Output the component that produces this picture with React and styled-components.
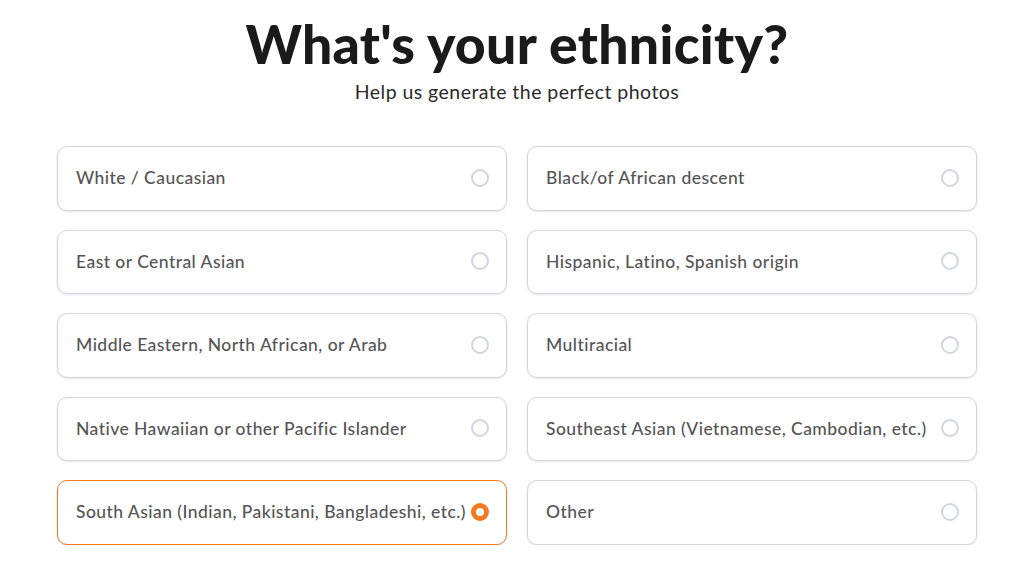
import React, { useState } from "react";
import styled, { createGlobalStyle } from "styled-components";

const Global = createGlobalStyle`
  html, body { margin: 0; padding: 0; background: #ffffff; }
  body { font-family: Lato, "Open Sans", sans-serif; -webkit-font-smoothing: antialiased; }
`;

const Page = styled.div`
  width: 920px;
  margin-left: 57px;
  padding-top: 11px;
  display: flex;
  flex-direction: column;
  align-items: center;
`;

const Title = styled.h1`
  margin: 0;
  font-family: Lato, sans-serif;
  font-weight: 900;
  font-size: 53.5px;
  line-height: 64px;
  color: #1a1a1a;
  letter-spacing: 0.3px;
`;

const Subtitle = styled.p`
  margin: 5px 0 0;
  font-family: Lato, sans-serif;
  font-size: 19.5px;
  line-height: 24px;
  color: #2a2a2a;
  letter-spacing: 0.45px;
`;

const Grid = styled.div`
  width: 100%;
  margin-top: 42px;
  display: grid;
  grid-template-columns: 1fr 1fr;
  grid-auto-rows: 64.5px;
  column-gap: 20px;
  row-gap: 19px;
`;

const Card = styled.button`
  box-sizing: border-box;
  display: flex;
  align-items: center;
  justify-content: space-between;
  padding: 0 17px 1px 18px;
  border-radius: 10px;
  border: 1px solid ${(p) => (p.$selected ? "#f47a1f" : "#d3d4dc")};
  background: #fff;
  box-shadow: 0 1px 2px rgba(60, 60, 80, 0.12);
  cursor: pointer;
  text-align: left;
  font-family: Lato, sans-serif;
  font-size: 17.5px;
  font-weight: 500;
  letter-spacing: 0.45px;
  color: #555555;
`;

const Label = styled.span`
  white-space: nowrap;
`;

const Radio = styled.span`
  width: 18px;
  height: 18px;
  box-sizing: border-box;
  border-radius: 50%;
  flex: none;
  margin-left: 4px;
  border: ${(p) => (p.$selected ? "5.5px solid #f47a1f" : "2px solid #d2d5de")};
  background: #fff;
`;

const options = [
  "White / Caucasian",
  "Black/of African descent",
  "East or Central Asian",
  "Hispanic, Latino, Spanish origin",
  "Middle Eastern, North African, or Arab",
  "Multiracial",
  "Native Hawaiian or other Pacific Islander",
  "Southeast Asian (Vietnamese, Cambodian, etc.)",
  "South Asian (Indian, Pakistani, Bangladeshi, etc.)",
  "Other",
];

export default function App() {
  const [selected, setSelected] = useState(8);
  return (
    <>
      <Global />
      <Page>
        <Title>What's your ethnicity?</Title>
        <Subtitle>Help us generate the perfect photos</Subtitle>
        <Grid>
          {options.map((o, i) => (
            <Card key={o} $selected={selected === i} onClick={() => setSelected(i)}>
              <Label>{o}</Label>
              <Radio $selected={selected === i} />
            </Card>
          ))}
        </Grid>
      </Page>
    </>
  );
}
